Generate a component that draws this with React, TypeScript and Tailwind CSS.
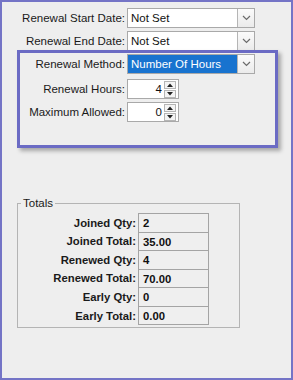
import React from "react";

const Chevron = () => (
  <svg width="9" height="6" viewBox="0 0 9 6">
    <polyline points="1,1 4.5,4.5 8,1" fill="none" stroke="#6b6b6b" strokeWidth="1.2" />
  </svg>
);

function Combo({ value, selected }: { value: string; selected?: boolean }) {
  return (
    <div className="flex h-[20px] w-[128px] border border-[#a9a9a9] bg-white">
      <div className={selected ? "flex-1 flex items-center pl-[3px] bg-[#1873cf] text-white" : "flex-1 flex items-center pl-[3px] text-[#111]"}>
        {value}
      </div>
      <div className="w-[17px] flex items-center justify-center border-l border-[#b5b5b5] bg-gradient-to-b from-[#fbfbfb] to-[#ebebeb]">
        <Chevron />
      </div>
    </div>
  );
}

function Spinner({ value }: { value: string }) {
  return (
    <div className="flex h-[20px] w-[52px] border border-[#a9a9a9] bg-white items-center">
      <div className="flex-1 text-right pr-[2px] text-[#111]">{value}</div>
      <div className="flex flex-col w-[12px] mr-[2px] gap-[1px]">
        <div className="h-[8px] border border-[#b5b5b5] bg-[#f4f4f4] flex items-center justify-center">
          <svg width="6" height="4" viewBox="0 0 6 4"><polygon points="0,4 3,0.5 6,4" fill="#222" /></svg>
        </div>
        <div className="h-[8px] border border-[#b5b5b5] bg-[#f4f4f4] flex items-center justify-center">
          <svg width="6" height="4" viewBox="0 0 6 4"><polygon points="0,0 3,3.5 6,0" fill="#222" /></svg>
        </div>
      </div>
    </div>
  );
}

function Row({ label, children, className }: { label: string; children: React.ReactNode; className?: string }) {
  return (
    <div className={"flex items-center h-[20px] gap-[2px] " + (className ?? "")}>
      <div className="w-[123px] text-right text-[#1a1a1a]">{label}</div>
      {children}
    </div>
  );
}

const totals: [string, string, string][] = [
  ["Joined Qty:", "2", "h-[19px]"],
  ["Joined Total:", "35.00", "h-[18px]"],
  ["Renewed Qty:", "4", "h-[19px]"],
  ["Renewed Total:", "70.00", "h-[18px]"],
  ["Early Qty:", "0", "h-[19px]"],
  ["Early Total:", "0.00", "h-[19px] border-b"],
];

export default function App() {
  return (
    <div className="relative w-[293px] h-[380px] border-2 border-[#7474c6] bg-[#eeeeee] font-['Liberation_Sans',Arial,sans-serif] text-[11.5px] leading-[14px] text-black overflow-hidden">
      <div className="pt-[6px] flex flex-col gap-[3px]">
        <Row label="Renewal Start Date:"><Combo value="Not Set" /></Row>
        <Row label="Renewal End Date:"><Combo value="Not Set" /></Row>
        <Row label="Renewal Method:"><Combo value="Number Of Hours" selected /></Row>
        <Row label="Renewal Hours:" className="mt-[2px]"><Spinner value="4" /></Row>
        <Row label="Maximum Allowed:"><Spinner value="0" /></Row>
      </div>

      <fieldset className="mt-[74px] ml-[15px] w-[223px] border border-[#b4b4b4] pt-[3px] pb-[2px]">
        <legend className="ml-[3px] px-[2px] leading-[14px] text-[#1a1a1a]">Totals</legend>
        <div className="flex flex-col">
          {totals.map(([l, v, h]) => (
            <div key={l} className="flex items-center gap-[2px]">
              <div className="w-[118px] text-right font-bold text-[11.3px] text-[#1a1a1a]">{l}</div>
              <div className={"w-[71px] flex items-center pl-[4px] border-t border-l border-r border-[#a4a4a4] bg-[#efefef] font-bold text-[11.3px] text-[#111] " + h}>
                {v}
              </div>
            </div>
          ))}
        </div>
      </fieldset>

      <div className="absolute left-[15px] top-[48px] w-[261px] h-[98px] border-[3px] border-[#6b6bc4] shadow-[3px_3px_4px_rgba(0,0,0,0.3)]" />
    </div>
  );
}
